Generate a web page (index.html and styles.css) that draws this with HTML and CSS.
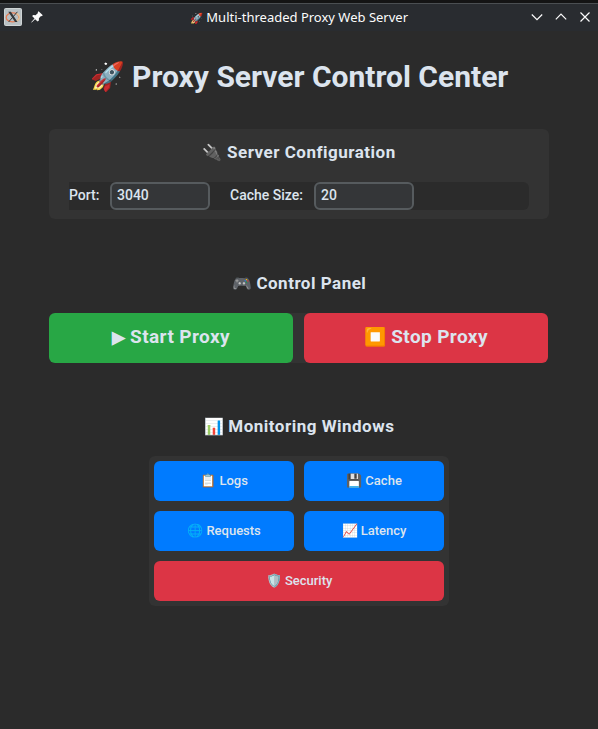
FILE: index.html
```html
<!DOCTYPE html>
<html lang="en">
<head>
<meta charset="utf-8">
<title>Multi-threaded Proxy Web Server</title>
<link rel="stylesheet" href="styles.css">
</head>
<body>
<header class="titlebar">
  <div class="titlebar-left">
    <svg class="app-icon" width="18" height="18" viewBox="0 0 18 18">
      <rect x="0.5" y="0.5" width="17" height="17" rx="1" fill="#b9c1c4" stroke="#cfd4d5"/>
      <ellipse cx="8.6" cy="9.4" rx="6.4" ry="4.5" fill="none" stroke="#e77b52" stroke-width="1.3"/>
      <path d="M12 5.2Q16 7 15.4 10Q14.5 12.5 11 13.6" fill="none" stroke="#dfc39b" stroke-width="1.5"/>
      <path d="M4.3 3.8h2.6l6.6 10.2H11z" fill="#34383a"/>
      <path d="M13.4 3.8L4.6 14" stroke="#34383a"/>
    </svg>
    <svg class="pin" width="12" height="12" viewBox="0 0 12 12">
      <path d="M7.6 0.2L11.8 4.2L10.7 5.2L10 5L7.9 7.2V9.4L6.6 10.5L4.1 8.2L0.7 11.6L0.2 11.2L3.5 7.5L1.1 5.1L2.3 4L4.6 4.2L7 2L6.7 1.2Z" fill="#fcfcfc"/>
    </svg>
  </div>
  <div class="window-title"><span class="emoji">🚀</span> Multi-threaded Proxy Web Server</div>
  <div class="window-controls">
    <svg width="12" height="12" viewBox="0 0 12 12"><path d="M0.8 3.5L6 8.7L11.2 3.5"/></svg>
    <svg width="12" height="12" viewBox="0 0 12 12"><path d="M0.8 8.3L6 3.1L11.2 8.3"/></svg>
    <svg width="12" height="12" viewBox="0 0 12 12"><path d="M1.5 1.5L10.5 10.5M10.5 1.5L1.5 10.5"/></svg>
  </div>
</header>
<main>
  <h1><span class="emoji">🚀</span> Proxy Server Control Center</h1>
  <section class="config">
    <h2><span class="emoji">🔌</span> Server Configuration</h2>
    <div class="fields">
      <label for="port" class="port-label">Port:</label>
      <input id="port" value="3040">
      <label for="cache" class="cache-label">Cache Size:</label>
      <input id="cache" value="20">
    </div>
  </section>
  <section class="control">
    <h2><span class="emoji">🎮</span> Control Panel</h2>
    <div class="actions">
      <button class="large green"><span class="emoji play">▶</span> Start Proxy</button>
      <button class="large red"><span class="emoji">⏹️</span> Stop Proxy</button>
    </div>
  </section>
  <section class="monitoring">
    <h2><span class="emoji">📊</span> Monitoring Windows</h2>
    <div class="grid">
      <button>📋 Logs</button>
      <button>💾 Cache</button>
      <button>🌐 Requests</button>
      <button>📈 Latency</button>
      <button class="red wide">🛡️ Security</button>
    </div>
  </section>
</main>
</body>
</html>
```
FILE: styles.css
```css
* { box-sizing: border-box; }
body {
  margin: 0;
  height: 729px;
  overflow: hidden;
  background: #2b2b2b;
  color: #dce4ee;
  font-family: Roboto, "Noto Sans", sans-serif;
}
.titlebar {
  height: 31px;
  border-top: 3px solid #141414;
  background: #292c30;
  box-shadow: inset 0 1px #4b4f52;
  display: grid;
  grid-template-columns: 100px 1fr 100px;
  align-items: center;
}
.titlebar-left { display: flex; align-items: center; gap: 9px; padding-left: 4px; }
.window-title {
  text-align: center;
  font: 13px/20px "Noto Sans", sans-serif;
  color: #fcfcfc;
  white-space: nowrap;
}
.window-title .emoji { font-size: 10.5px; }
.window-controls { display: flex; justify-content: flex-end; gap: 12px; padding-right: 7px; }
.window-controls path { fill: none; stroke: #fcfcfc; stroke-width: 1.2; }
main { padding: 0 49px; }
h1, h2 { margin: 0; text-align: center; font-weight: 700; white-space: nowrap; }
h1 { font-size: 30px; line-height: 34px; padding-top: 29px; height: 98px; }
h1 .emoji { font-size: 28px; vertical-align: 1px; line-height: 1; }
h2 { font-size: 17px; line-height: 20px; letter-spacing: 0.5px; }
h2 .emoji { font-size: 16px; letter-spacing: 0; line-height: 1; }
.config { height: 90px; padding: 13px 20px 0; background: #333; border-radius: 6px; }
.fields {
  display: flex;
  align-items: center;
  height: 28px;
  margin-top: 20px;
  background: #2b2b2b;
  border-radius: 0 6px 6px 0;
  font-size: 14px;
}
label { white-space: nowrap; font-weight: 500; padding-bottom: 2px; }
.port-label { width: 41px; }
.cache-label { width: 84px; margin-left: 20px; }
input {
  width: 100px;
  height: 28px;
  padding: 0 5px 2px;
  border: 2px solid #565b5e;
  border-radius: 6px;
  background: #343638;
  color: #dce4ee;
  font: 500 14px Roboto, sans-serif;
}
.control { padding-top: 54px; }
.actions {
  display: grid;
  grid-template-columns: 244px 244px;
  gap: 11px;
  height: 50px;
  margin-top: 20px;
  background: linear-gradient(#333, #333) 240px 0 / 20px 50px no-repeat;
}
button {
  border: 0;
  padding: 0;
  border-radius: 6px;
  background: #007bff;
  color: #dce4ee;
  font: 500 13px/20px Roboto, sans-serif;
}
.large { font-size: 19px; font-weight: 700; letter-spacing: 0.4px; padding-bottom: 2px; }
.large .emoji { font-size: 18px; letter-spacing: 0; line-height: 1; }
.large .play { font-size: 17px; }
.green { background: #28a745; }
.red { background: #dc3545; }
.monitoring { padding-top: 53px; }
.grid {
  display: grid;
  grid-template: repeat(3, 40px) / 140px 140px;
  gap: 10px;
  width: 300px;
  height: 150px;
  margin: 20px auto 0;
  padding: 5px;
  background: #333;
  border-radius: 6px;
}
.wide { grid-column: 1 / -1; }
```
